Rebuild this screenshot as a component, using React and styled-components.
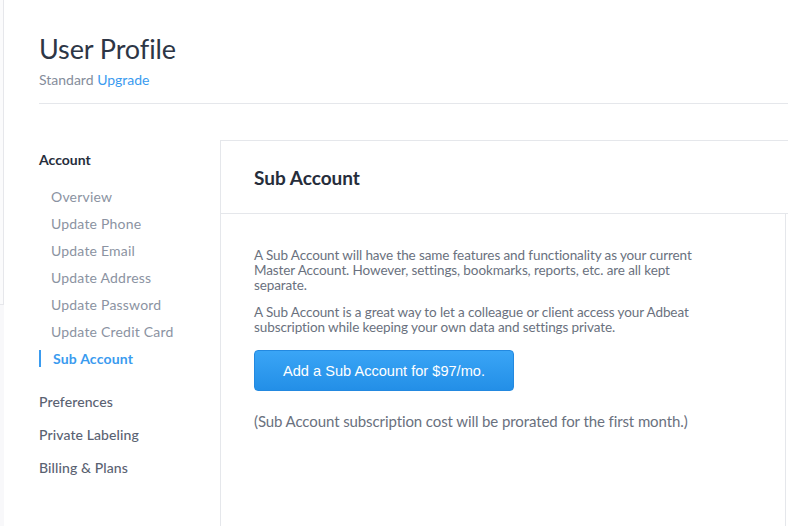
import React from "react";
import styled, { createGlobalStyle } from "styled-components";

const GlobalStyle = createGlobalStyle`
  html, body {
    margin: 0;
    padding: 0;
    background: #ffffff;
  }
  body {
    font-family: Lato, "Open Sans", sans-serif;
    -webkit-font-smoothing: antialiased;
  }
`;

const menu = [
  "Overview",
  "Update Phone",
  "Update Email",
  "Update Address",
  "Update Password",
  "Update Credit Card",
  "Sub Account",
];

const sections = ["Preferences", "Private Labeling", "Billing & Plans"];

const App = () => {
  return (
    <Page>
      <GlobalStyle />
      <EdgeStrip>
        <EdgeTop />
      </EdgeStrip>
      <Main>
        <Header>
          <Title>User Profile</Title>
          <Plan>
            Standard <Upgrade href="#">Upgrade</Upgrade>
          </Plan>
        </Header>
        <Content>
          <Sidebar>
            <GroupTitle>Account</GroupTitle>
            <SubList>
              {menu.map((item) => (
                <SubItem key={item} active={item === "Sub Account"}>
                  {item}
                </SubItem>
              ))}
            </SubList>
            {sections.map((item) => (
              <Section key={item}>{item}</Section>
            ))}
          </Sidebar>
          <Panel>
            <PanelHeader>
              <PanelTitle>Sub Account</PanelTitle>
            </PanelHeader>
            <PanelBody>
              <Text>
                A Sub Account will have the same features and functionality as
                your current Master Account. However, settings, bookmarks,
                reports, etc. are all kept separate.
              </Text>
              <Text>
                A Sub Account is a great way to let a colleague or client access
                your Adbeat subscription while keeping your own data and
                settings private.
              </Text>
              <Button>Add a Sub Account for $97/mo.</Button>
              <Note>
                (Sub Account subscription cost will be prorated for the first
                month.)
              </Note>
            </PanelBody>
          </Panel>
        </Content>
      </Main>
    </Page>
  );
};

const Page = styled.div`
  display: flex;
  min-height: 526px;
  overflow: hidden;
`;

const EdgeStrip = styled.div`
  width: 4px;
  flex-shrink: 0;
  background: #f8f8fa;
`;

const EdgeTop = styled.div`
  height: 304px;
  background: #fbfbfc;
  border-right: 1px solid #e6e7eb;
  border-bottom: 1px solid #e6e7eb;
`;

const Main = styled.div`
  flex: 1;
  display: flex;
  flex-direction: column;
  padding-left: 35px;
`;

const Header = styled.div`
  padding-top: 33px;
  height: 70px;
  border-bottom: 1px solid #e5e7eb;
`;

const Title = styled.h1`
  margin: 0;
  font-size: 27px;
  font-weight: 400;
  line-height: 32px;
  color: #2d3646;
  letter-spacing: -0.1px;
`;

const Plan = styled.div`
  margin-top: 6px;
  font-size: 14px;
  line-height: 18px;
  color: #858d9b;
`;

const Upgrade = styled.a`
  color: #3a9bef;
  text-decoration: none;
`;

const Content = styled.div`
  display: flex;
  margin-top: 36px;
  flex: 1;
`;

const Sidebar = styled.div`
  width: 181px;
  flex-shrink: 0;
  padding-top: 11px;
`;

const GroupTitle = styled.div`
  font-size: 14px;
  font-weight: 700;
  line-height: 18px;
  color: #262d3b;
`;

const SubList = styled.div`
  display: flex;
  flex-direction: column;
  margin-top: 14px;
  margin-bottom: 13px;
`;

const SubItem = styled.div`
  font-size: 14px;
  line-height: 27px;
  color: ${(p) => (p.active ? "#3a9bef" : "#8b93a2")};
  font-weight: ${(p) => (p.active ? 700 : 400)};
  padding-left: ${(p) => (p.active ? "14px" : "12px")};
  letter-spacing: 0.2px;
  position: relative;

  &::before {
    content: "";
    display: ${(p) => (p.active ? "block" : "none")};
    position: absolute;
    left: 0;
    top: 5px;
    width: 2px;
    height: 17px;
    background: #3a9bef;
  }
`;

const Section = styled.div`
  font-size: 14px;
  font-weight: 500;
  line-height: 33px;
  color: #5a6272;
  letter-spacing: 0.1px;
`;

const Panel = styled.div`
  flex: 1;
  display: flex;
  flex-direction: column;
  border-left: 1px solid #e5e7eb;
  border-top: 1px solid #e5e7eb;
`;

const PanelHeader = styled.div`
  height: 72px;
  display: flex;
  align-items: center;
  padding-left: 33px;
  border-bottom: 1px solid #e5e7eb;
`;

const PanelTitle = styled.h2`
  margin: 0;
  font-size: 19px;
  font-weight: 700;
  color: #262d3b;
`;

const PanelBody = styled.div`
  flex: 1;
  margin-right: 2px;
  border-right: 1px solid #e5e7eb;
  padding: 34px 60px 0 33px;
`;

const Text = styled.p`
  margin: 0 0 12px;
  max-width: 460px;
  font-size: 13.5px;
  line-height: 15px;
  letter-spacing: -0.1px;
  color: #6a717e;
`;

const Button = styled.button`
  display: block;
  margin-top: 15px;
  width: 260px;
  height: 41px;
  border: 1px solid #2389e0;
  border-radius: 4px;
  background: linear-gradient(#3aa5f6, #238fe7);
  color: #ffffff;
  font-family: "Liberation Sans", Arial, sans-serif;
  font-size: 14.6px;
  cursor: pointer;
`;

const Note = styled.p`
  margin: 21px 0 0;
  font-size: 15px;
  line-height: 18px;
  letter-spacing: -0.1px;
  color: #6a717e;
`;

export default App;
